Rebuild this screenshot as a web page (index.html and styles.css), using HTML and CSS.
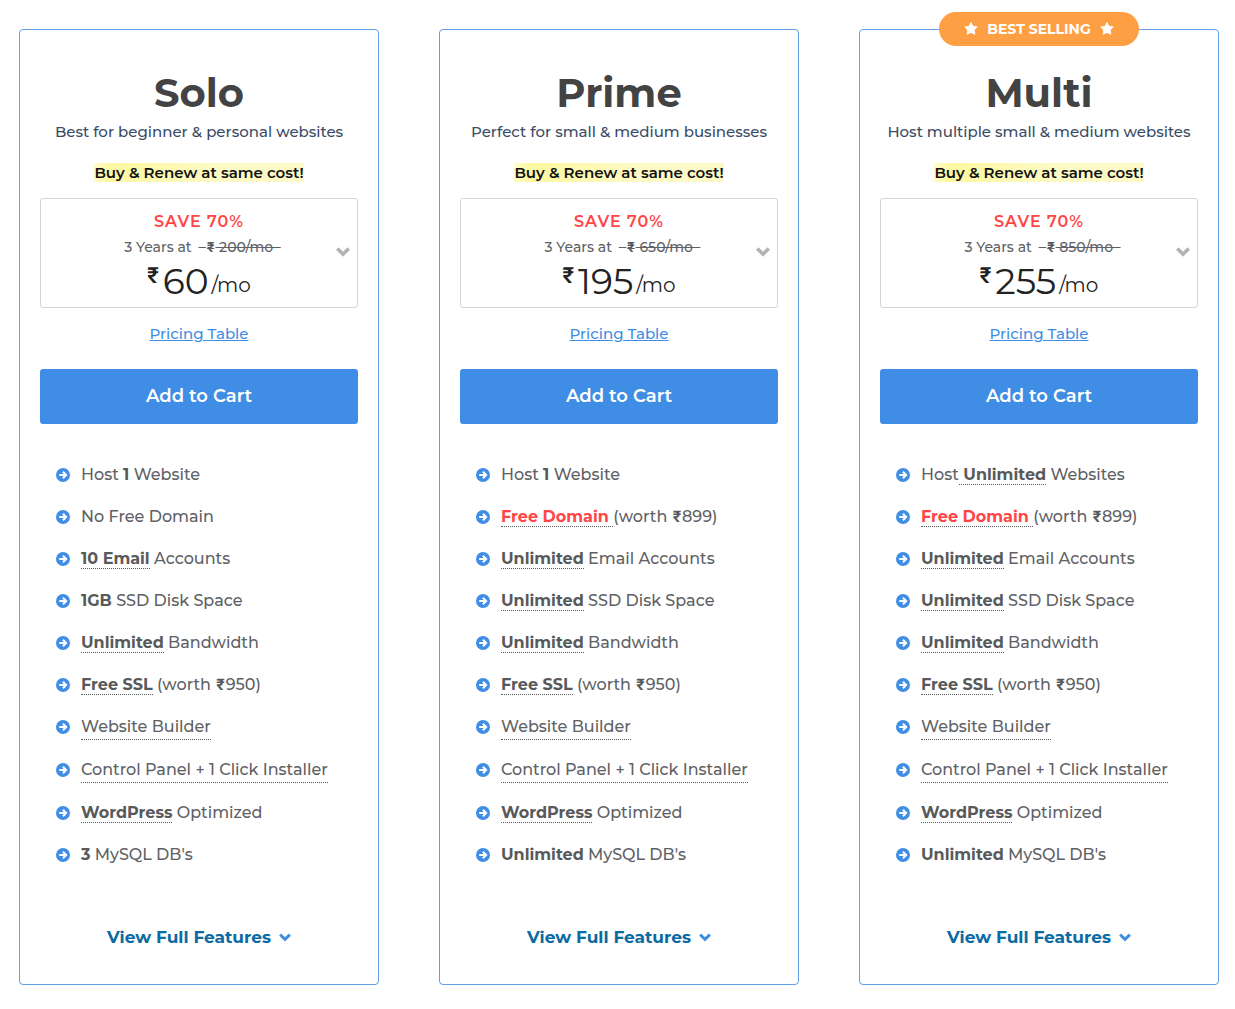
FILE: index.html
```html
<!DOCTYPE html>
<html lang="en">
<head>
<meta charset="utf-8">
<meta name="viewport" content="width=device-width, initial-scale=1">
<title>Hosting plans</title>
<link rel="stylesheet" href="styles.css">
</head>
<body>
<svg class="sprite" aria-hidden="true">
  <symbol id="arrow" viewBox="0 0 14 14"><circle cx="7" cy="7" r="7" fill="currentColor"/><path d="M3.2 7H9.6M6.9 3.7 10.2 7 6.9 10.3" fill="none" stroke="#fff" stroke-width="2"/></symbol>
  <symbol id="chevron" viewBox="0 0 14 10"><path d="M.2 2.6 2.4.5Q2.6.3 2.8.5L7 4.7 11.2.5Q11.4.3 11.6.5L13.8 2.6Q14 2.8 13.8 3L7.2 9.5Q7 9.7 6.8 9.5L.2 3Q0 2.8.2 2.6Z" fill="currentColor"/></symbol>
  <symbol id="star" viewBox="0 0 14 13"><path d="M7 .6 8.9 4.4 13.2 5 10.1 8 10.8 12.3 7 10.3 3.2 12.3 3.9 8 .8 5 5.1 4.4Z" fill="currentColor" stroke="currentColor" stroke-linejoin="round"/></symbol>
</svg>
<main class="plans">
  <section class="plan">
    <h2 class="plan-name">Solo</h2>
    <p class="plan-tagline">Best for beginner &amp; personal websites</p>
    <p class="plan-note"><mark class="highlight">Buy &amp; Renew at same cost!</mark></p>
    <button class="term" type="button" aria-haspopup="listbox">
      <span class="term-save">SAVE 70%</span>
      <span class="term-length">3 Years at <s class="old-price">&nbsp;&nbsp;<b class="rs">₹</b> 200/mo&nbsp;&nbsp;</s></span>
      <span class="price"><span class="currency">₹</span><span class="amount">60</span><span class="unit">/mo</span></span>
      <svg class="term-chevron"><use href="#chevron"/></svg>
    </button>
    <a class="pricing-link" href="#pricing">Pricing Table</a>
    <button class="cart" type="button">Add to Cart</button>
    <ul class="features">
      <li><svg class="bullet"><use href="#arrow"/></svg><span>Host <b>1</b> Website</span></li>
      <li><svg class="bullet"><use href="#arrow"/></svg><span>No Free Domain</span></li>
      <li><svg class="bullet"><use href="#arrow"/></svg><span><b class="tip">10 Email</b> Accounts</span></li>
      <li><svg class="bullet"><use href="#arrow"/></svg><span><b>1GB</b> SSD Disk Space</span></li>
      <li><svg class="bullet"><use href="#arrow"/></svg><span><b class="tip">Unlimited</b> Bandwidth</span></li>
      <li><svg class="bullet"><use href="#arrow"/></svg><span><b class="tip">Free SSL</b> (worth <b class="rs">₹</b>950)</span></li>
      <li class="tall"><svg class="bullet"><use href="#arrow"/></svg><span class="tip">Website Builder</span></li>
      <li class="tall"><svg class="bullet"><use href="#arrow"/></svg><span class="tip">Control Panel + 1 Click Installer</span></li>
      <li><svg class="bullet"><use href="#arrow"/></svg><span><b class="tip">WordPress</b> Optimized</span></li>
      <li><svg class="bullet"><use href="#arrow"/></svg><span><b>3</b> MySQL DB's</span></li>
    </ul>
    <a class="more" href="#solo">View Full Features <svg class="more-chevron"><use href="#chevron"/></svg></a>
  </section>

  <section class="plan">
    <h2 class="plan-name">Prime</h2>
    <p class="plan-tagline">Perfect for small &amp; medium businesses</p>
    <p class="plan-note"><mark class="highlight">Buy &amp; Renew at same cost!</mark></p>
    <button class="term" type="button" aria-haspopup="listbox">
      <span class="term-save">SAVE 70%</span>
      <span class="term-length">3 Years at <s class="old-price">&nbsp;&nbsp;<b class="rs">₹</b> 650/mo&nbsp;&nbsp;</s></span>
      <span class="price"><span class="currency">₹</span><span class="amount">195</span><span class="unit">/mo</span></span>
      <svg class="term-chevron"><use href="#chevron"/></svg>
    </button>
    <a class="pricing-link" href="#pricing">Pricing Table</a>
    <button class="cart" type="button">Add to Cart</button>
    <ul class="features">
      <li><svg class="bullet"><use href="#arrow"/></svg><span>Host <b>1</b> Website</span></li>
      <li><svg class="bullet"><use href="#arrow"/></svg><span><b class="tip offer">Free Domain </b>(worth <b class="rs">₹</b>899)</span></li>
      <li><svg class="bullet"><use href="#arrow"/></svg><span><b class="tip">Unlimited</b> Email Accounts</span></li>
      <li><svg class="bullet"><use href="#arrow"/></svg><span><b class="tip">Unlimited</b> SSD Disk Space</span></li>
      <li><svg class="bullet"><use href="#arrow"/></svg><span><b class="tip">Unlimited</b> Bandwidth</span></li>
      <li><svg class="bullet"><use href="#arrow"/></svg><span><b class="tip">Free SSL</b> (worth <b class="rs">₹</b>950)</span></li>
      <li class="tall"><svg class="bullet"><use href="#arrow"/></svg><span class="tip">Website Builder</span></li>
      <li class="tall"><svg class="bullet"><use href="#arrow"/></svg><span class="tip">Control Panel + 1 Click Installer</span></li>
      <li><svg class="bullet"><use href="#arrow"/></svg><span><b class="tip">WordPress</b> Optimized</span></li>
      <li><svg class="bullet"><use href="#arrow"/></svg><span><b>Unlimited</b> MySQL DB's</span></li>
    </ul>
    <a class="more" href="#prime">View Full Features <svg class="more-chevron"><use href="#chevron"/></svg></a>
  </section>

  <section class="plan">
    <p class="badge"><svg class="star"><use href="#star"/></svg>BEST SELLING<svg class="star"><use href="#star"/></svg></p>
    <h2 class="plan-name">Multi</h2>
    <p class="plan-tagline">Host multiple small &amp; medium websites</p>
    <p class="plan-note"><mark class="highlight">Buy &amp; Renew at same cost!</mark></p>
    <button class="term" type="button" aria-haspopup="listbox">
      <span class="term-save">SAVE 70%</span>
      <span class="term-length">3 Years at <s class="old-price">&nbsp;&nbsp;<b class="rs">₹</b> 850/mo&nbsp;&nbsp;</s></span>
      <span class="price"><span class="currency">₹</span><span class="amount">255</span><span class="unit">/mo</span></span>
      <svg class="term-chevron"><use href="#chevron"/></svg>
    </button>
    <a class="pricing-link" href="#pricing">Pricing Table</a>
    <button class="cart" type="button">Add to Cart</button>
    <ul class="features">
      <li><svg class="bullet"><use href="#arrow"/></svg><span>Host<b class="tip"> Unlimited</b> Websites</span></li>
      <li><svg class="bullet"><use href="#arrow"/></svg><span><b class="tip offer">Free Domain </b>(worth <b class="rs">₹</b>899)</span></li>
      <li><svg class="bullet"><use href="#arrow"/></svg><span><b class="tip">Unlimited</b> Email Accounts</span></li>
      <li><svg class="bullet"><use href="#arrow"/></svg><span><b class="tip">Unlimited</b> SSD Disk Space</span></li>
      <li><svg class="bullet"><use href="#arrow"/></svg><span><b class="tip">Unlimited</b> Bandwidth</span></li>
      <li><svg class="bullet"><use href="#arrow"/></svg><span><b class="tip">Free SSL</b> (worth <b class="rs">₹</b>950)</span></li>
      <li class="tall"><svg class="bullet"><use href="#arrow"/></svg><span class="tip">Website Builder</span></li>
      <li class="tall"><svg class="bullet"><use href="#arrow"/></svg><span class="tip">Control Panel + 1 Click Installer</span></li>
      <li><svg class="bullet"><use href="#arrow"/></svg><span><b class="tip">WordPress</b> Optimized</span></li>
      <li><svg class="bullet"><use href="#arrow"/></svg><span><b>Unlimited</b> MySQL DB's</span></li>
    </ul>
    <a class="more" href="#multi">View Full Features <svg class="more-chevron"><use href="#chevron"/></svg></a>
  </section>
</main>
</body>
</html>
```
FILE: styles.css
```css
* { box-sizing: border-box; }
body {
  margin: 0;
  background: #fff;
  color: #606165;
  font-family: Montserrat, Inter, sans-serif;
  font-size: 16px;
  font-weight: 500;
  line-height: 24px;
}
h2, p, ul { margin: 0; padding: 0; }
button { font-family: inherit; font-weight: 500; cursor: pointer; }
b { color: #58595b; font-weight: 700; }
.rs { padding: 0 1px; font-family: Roboto, sans-serif; }
.sprite { display: none; }

.plans {
  display: grid;
  grid-template-columns: repeat(3, minmax(0, 1fr));
  gap: 60px;
  padding: 29px 16px 24px 19px;
}
.plan {
  position: relative;
  display: flex;
  flex-direction: column;
  padding: 39px 20px 35px;
  border: 1px solid #5e9fe6;
  border-radius: 4px;
  text-align: center;
}
.badge {
  position: absolute;
  top: -18px;
  left: 50%;
  transform: translateX(-50%);
  display: flex;
  align-items: center;
  justify-content: center;
  gap: 9px;
  width: 200px;
  height: 34px;
  border-radius: 17px;
  background: #ff9f43;
  color: #fff;
  font-size: 14px;
  font-weight: 700;
  white-space: nowrap;
}
.star { width: 14px; height: 13px; margin-bottom: 2px; }

.plan-name {
  color: #434343;
  font-size: 40px;
  font-weight: 700;
  line-height: 48px;
}
.plan-tagline {
  margin-top: 3px;
  color: #3a4b66;
  font-size: 15px;
}
.plan-note { margin-top: 19px; line-height: 19px; }
.highlight {
  display: inline-block;
  background: linear-gradient(100deg, #fffcd0, #fcf8a0 8%, #fdfac6 60%, #fdfac8);
  color: #111;
  font-size: 15px;
  font-weight: 600;
}

.term {
  position: relative;
  display: flex;
  flex-direction: column;
  align-items: center;
  margin-top: 16px;
  padding: 10px 8px 5px;
  border: 1px solid #d4d4d4;
  border-radius: 3px;
  background: #fff;
  color: #222;
}
.term-save {
  color: #ff4545;
  font-size: 16px;
  font-weight: 600;
  letter-spacing: 1px;
  line-height: 26px;
}
.term-length { padding-left: 7px; color: #606165; font-size: 14px; line-height: 24px; }
.old-price { margin-left: 3px; }
.price {
  display: flex;
  align-items: flex-start;
  height: 42px;
  margin-top: 1px;
}
.currency {
  margin-right: 4px;
  font-family: Roboto, sans-serif;
  font-size: 22px;
  font-weight: 600;
  line-height: 32px;
}
.amount { font-size: 36px; font-weight: 400; line-height: 42px; }
.unit { margin-left: 3px; font-size: 20px; font-weight: 400; line-height: 50px; }
.term-chevron {
  position: absolute;
  top: 48px;
  right: 7px;
  width: 14px;
  height: 10px;
  color: #b3b3b3;
}

.pricing-link {
  align-self: center;
  margin-top: 14px;
  color: #3f8de4;
  font-size: 15px;
}
.cart {
  height: 55px;
  margin-top: 23px;
  padding-bottom: 3px;
  border: 0;
  border-radius: 3px;
  background: #3f8de4;
  color: #fff;
  font-size: 18px;
  font-weight: 600;
}

.features { margin-top: 30px; padding-left: 16px; list-style: none; text-align: left; }
.features li { display: flex; align-items: center; gap: 11px; height: 42px; white-space: nowrap; }
.features .tall { height: 43px; padding-bottom: 1px; }
.bullet { flex: none; width: 14px; height: 14px; color: #3f8de4; }
.tip { border-bottom: 1px dotted #58595b; }
.offer { color: #ff4545; }

.more {
  display: flex;
  align-items: center;
  justify-content: center;
  gap: 8px;
  margin-top: 49px;
  color: #0a6ba3;
  font-size: 17px;
  font-weight: 700;
  text-decoration: none;
}
.more-chevron { width: 12px; height: 9px; color: #3f8de4; }
```
